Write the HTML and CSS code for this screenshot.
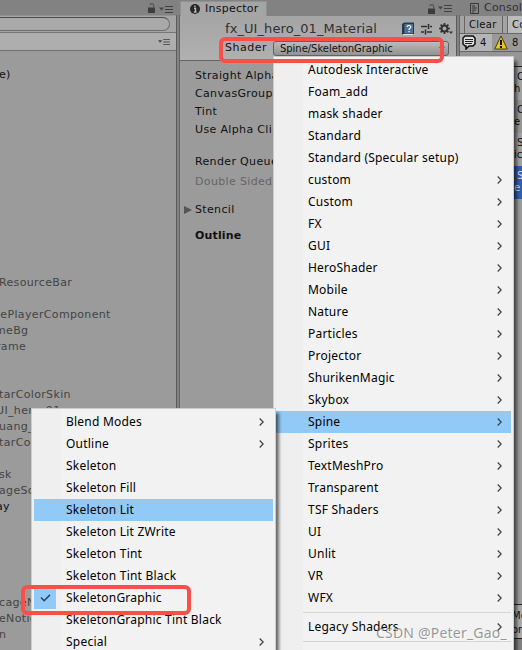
FILE: index.html
```html
<!DOCTYPE html>
<html lang="en"><head><meta charset="utf-8"><title>Inspector</title><link rel="stylesheet" href="styles.css"></head>
<body>
<svg width="0" height="0" class="defs"><defs>
<symbol id="lock" viewBox="0 0 8 10"><path d="M0 4.5h7V10H0z" fill="#3c3c3c"/><path d="M2 2.2C2.4 0 5.7 0 5.7 2.5V5" fill="none" stroke="#555" stroke-width="1.2"/></symbol>
<symbol id="opts" viewBox="0 0 14 7"><path d="M0 1.5h5L2.500 4.500z" fill="#444"/><path d="M6 .5h8M6 3.5h8M6 6.500h8" stroke="#414141" stroke-width="1"/></symbol>
<symbol id="arr" viewBox="0 0 5 8"><path d="M.7.5L4.2 4 .7 7.5" fill="none" stroke="#444" stroke-width="1.3"/></symbol>
</defs></svg>
<div class="app">
<section class="hierarchy">
<div class="bar"><svg class="lock"><use href="#lock"/></svg><svg class="opts"><use href="#opts"/></svg></div>
<div class="search"><div class="field"></div></div>
<div class="scene"><svg class="opts small"><use href="#opts"/></svg></div>
<div class="tree"><p class="r0 live">e)</p><p class="r13">ResourceBar</p><p class="r15 cut6">nePlayerComponent</p><p class="r16 cut4">meBg</p><p class="r17 cut3">rame</p><p class="r20">tarColorSkin</p><p class="r21 cut3">UI_hero_01</p><p class="r22">uang_</p><p class="r23">tarCol</p><p class="r25">sk</p><p class="r26">ageScr</p><p class="r27 live cut3">ay</p><p class="r33">cageNo</p><p class="r34">eNotice</p><p class="r35">n</p></div>
</section>
<div class="split"></div>
<section class="inspector">
<div class="tabs"><div class="tab"><svg width="10" height="10" viewBox="0 0 10 10"><circle cx="5" cy="5" r="5" fill="#262626"/><path d="M5 1.5v1.7M4 4.5h1.5V8M3.8 8h2.8" fill="none" stroke="#bbb" stroke-width="1.4"/></svg><span>Inspector</span></div><svg class="lock"><use href="#lock"/></svg><svg class="opts"><use href="#opts"/></svg></div>
<div class="head">
<div class="title"><span>fx_UI_hero_01_Material</span>
<svg class="book" viewBox="0 0 14 14"><path d="M1 2l2-1.500h10v11l-1.500 1.500H2L1 12z" fill="#26384e"/><path d="M3.500 2H12v9.500H3.500z" fill="#4f7398"/><path d="M2 12.500h10" stroke="#ddd"/><path d="M6 5c0-2 4-2 3.800 0C9.500 6.500 8 6 8 8M8 9v1.300" fill="none" stroke="#fff" stroke-width="1.2"/></svg>
<svg class="sliders" viewBox="0 0 11 11"><path d="M0 2.500h6M9 2.500h2M0 8h3M6 8h5" stroke="#303030" stroke-width="1.7"/><path d="M7.500 0v5M4.500 5.500v5" stroke="#303030" stroke-width="1.6"/></svg>
<svg class="gear" viewBox="0 0 14 12"><circle cx="5.500" cy="5.500" r="3" fill="none" stroke="#333" stroke-width="2"/><path d="M5.500 0v2M5.500 9v2M0 5.500h2M9 5.500h2M1.600 1.600L3 3M8 8l1.400 1.400M9.400 1.600L8 3M3 8L1.600 9.400" stroke="#333" stroke-width="1.7"/><path d="M10 8.500h4l-2 2.500z" fill="#333"/></svg></div>
<div class="shader"><span>Shader</span><div class="drop">Spine/SkeletonGraphic<i></i></div></div>
</div>
<div class="props"><p>Straight Alpha</p><p>CanvasGroup</p><p>Tint</p><p>Use Alpha Clip</p><p class="queue">Render Queue</p><p class="off">Double Sided</p><p class="fold">Stencil</p><p class="outline">Outline</p></div>
</section>
<div class="split"></div>
<section class="console">
<div class="ctab"><svg width="9" height="11" viewBox="0 0 9 11"><path d="M.5.500h8v10h-8zM2 3h3M2 5h5M2 7h4M2 9h2" fill="none" stroke="#383838"/></svg><span>Console</span></div>
<div class="tools"><span>Clear</span><span class="coll">Collapse</span></div>
<div class="counts"><div class="info"><svg width="14" height="15" viewBox="0 0 14 15"><path d="M3 1h8l2 2v6l-2 2H7l-3 3V11H3L1 9V3z" fill="#ddd" stroke="#111" stroke-width="1.500"/><path d="M3 4.500h8M3 6.500h8M3 8.500h7" stroke="#222"/></svg><span>4</span></div><div class="warn"><svg width="14" height="15" viewBox="0 0 14 15"><path d="M7 1L13.300 14H.7z" fill="#e5c629" stroke="#4b3e0b"/><path d="M7 5v5M7 11v2" stroke="#111" stroke-width="2"/></svg><span>8</span></div></div>
<div class="log"><div class="msg m0"></div><div class="msg"><p>C</p><p class="in">h</p></div><div class="msg"><p>C</p><p class="in">e</p></div><div class="msg"><p>S</p><p class="in">ic</p></div><div class="msg sel"><p>S</p><p class="in">e</p></div></div>
<div class="detail"><p>Me</p><p class="or">or</p></div><div class="foot"></div>
</section>
</div>
<nav class="menu main">
<p>Autodesk Interactive</p><p>Foam_add</p><p>mask shader</p><p>Standard</p><p>Standard (Specular setup)</p>
<p>custom<svg><use href="#arr"/></svg></p><p>Custom<svg><use href="#arr"/></svg></p><p>FX<svg><use href="#arr"/></svg></p><p>GUI<svg><use href="#arr"/></svg></p><p>HeroShader<svg><use href="#arr"/></svg></p><p>Mobile<svg><use href="#arr"/></svg></p><p>Nature<svg><use href="#arr"/></svg></p><p>Particles<svg><use href="#arr"/></svg></p><p>Projector<svg><use href="#arr"/></svg></p><p>ShurikenMagic<svg><use href="#arr"/></svg></p><p>Skybox<svg><use href="#arr"/></svg></p><p class="hot">Spine<svg><use href="#arr"/></svg></p><p>Sprites<svg><use href="#arr"/></svg></p><p>TextMeshPro<svg><use href="#arr"/></svg></p><p>Transparent<svg><use href="#arr"/></svg></p><p>TSF Shaders<svg><use href="#arr"/></svg></p><p>UI<svg><use href="#arr"/></svg></p><p>Unlit<svg><use href="#arr"/></svg></p><p>VR<svg><use href="#arr"/></svg></p><p>WFX<svg><use href="#arr"/></svg></p><hr><p>Legacy Shaders<svg><use href="#arr"/></svg></p><hr>
</nav>
<nav class="menu sub">
<p>Blend Modes<svg><use href="#arr"/></svg></p><p>Outline<svg><use href="#arr"/></svg></p><p>Skeleton</p><p>Skeleton Fill</p><p class="hot">Skeleton Lit</p><p>Skeleton Lit ZWrite</p><p>Skeleton Tint</p><p>Skeleton Tint Black</p><p class="checked"><b><svg viewBox="0 0 12 9"><path d="M1 4l3.500 3.500L11 1" fill="none" stroke="#2c4358" stroke-width="1.700"/></svg></b>SkeletonGraphic</p><p>SkeletonGraphic Tint Black</p><p>Special<svg><use href="#arr"/></svg></p>
</nav>
<div class="mark top"></div><div class="mark bottom"></div>
<div class="credit">CSDN @Peter_Gao_</div>
</body></html>
```
FILE: styles.css
```css
*{box-sizing:border-box}
body,p{margin:0}
body{width:522px;height:650px;overflow:hidden;position:relative;background:#9b9b9b;font:11px/16px "DejaVu Sans",sans-serif;color:#111;white-space:nowrap}
svg{flex:none;display:block}
.defs{position:absolute}
.app{display:flex;height:650px}
.hierarchy{width:176px;overflow:hidden;background:#9b9b9b}
.bar{height:15px;background:#828282;display:flex;justify-content:flex-end;align-items:flex-end;gap:3px;padding:0 3px 2px 0}
.lock{width:8px;height:10px}
.opts{width:14px;height:7px}
.opts.small{height:6px}
.search{height:17px;background:#a5a5a5;padding:1px 6px 1px 0;border-top:1px solid #929292}
.field{height:14px;background:#a9a9a9;border:1px solid #707070;border-top:1px solid #4c4c4c;border-left:0;border-radius:0 8px 8px 0}
.scene{height:19px;background:#aeaeae;border-top:1px solid #777;border-bottom:1px solid #727272;display:flex;justify-content:flex-end;align-items:center;padding-right:5px}
.tree{height:599px;padding-top:16px;display:grid;grid-template-rows:repeat(36,16px);color:#444;letter-spacing:.35px}
.tree p{margin-left:-1px}
.tree .cut3{margin-left:-4px}
.tree .cut4{margin-left:-5px}
.tree .cut6{margin-left:-7px}
.tree .live{color:#111}
.r0{grid-row:1}.r13{grid-row:14}.r15{grid-row:16}.r16{grid-row:17}.r17{grid-row:18}.r20{grid-row:21}.r21{grid-row:22}.r22{grid-row:23}.r23{grid-row:24}.r25{grid-row:26}.r26{grid-row:27}.r27{grid-row:28}.r33{grid-row:34}.r34{grid-row:35}.r35{grid-row:36}
.split{width:4px;margin-top:15px;background:#818181;border-left:1px solid #5c5c5c;border-right:1px solid #656565;flex:none;box-shadow:0 -15px #828282}
.inspector{width:276px;background:#9b9b9b}
.tabs{height:16px;background:#828282;display:flex;align-items:center;padding:1px 4px 0 0;gap:2px}
.tab{width:87px;height:15px;background:#a5a5a5;border:1px solid #919191;border-bottom:0;display:flex;align-items:center;gap:5px;padding-left:9px;margin-right:auto;letter-spacing:.25px}
.head{height:45px;border-bottom:1px solid #646464;background:linear-gradient(#a5a5a5,#b0b0b0)}
.title{height:24px;display:flex;align-items:center;padding:2px 3px 0 45px;font-size:13px;letter-spacing:.08px;color:#303030}
.title span{flex:1}
.book{width:14px;height:14px}.sliders{width:11px;height:11px;margin-left:6px}.gear{width:14px;height:12px;margin-left:7px}
.shader{display:flex;align-items:center;padding-left:45px;height:16px}
.shader span{width:48px;letter-spacing:.5px}
.drop{width:176px;height:15px;border:1px solid #626262;border-radius:3px;background:linear-gradient(#bbb,#929292);padding-left:6px;font-size:10px;line-height:13px;display:flex;align-items:center;justify-content:space-between;letter-spacing:-.04px}
.drop i{border:3px solid transparent;border-top-color:#333;margin:3px 3px 0 0}
.props{padding:6px 0 0 15px;letter-spacing:.35px;width:93px}
.props p{height:18px;line-height:18px}
.props .queue{margin-top:14px}
.props .off{color:#666;height:20px;line-height:22px}
.props .fold{margin:10px 0 0 -11px;display:flex;align-items:center}
.fold::before{content:"";border:4px solid transparent;border-left:8px solid #555;border-right:0;margin-right:3px}
.props .outline{font-weight:bold;margin-top:8px;letter-spacing:.15px}
.console{width:62px;display:flex;flex-direction:column;overflow:hidden;background:#9b9b9b}
.ctab{height:16px;background:#828282;display:flex;align-items:center;gap:5px;padding-left:10px;color:#303030;letter-spacing:.2px;flex:none}
.tools{height:18px;flex:none;display:flex;gap:4px;padding-left:4px;background:#a4a4a4;font-size:10px;border-bottom:1px solid #686868;line-height:18px}
.tools span{width:39px;flex:none;padding-left:4px;border:solid #666;border-width:0 1px;letter-spacing:.3px;line-height:18px}
.tools .coll{background:#bbb}
.counts{display:flex;height:18px;background:#999;border-bottom:1px solid #666;font-size:10px;flex:none}
.counts div{display:flex;align-items:center;gap:4px;padding-left:2px;width:32px;flex:none}
.counts .info{background:#b5b5b5}
.log{height:549px;flex:none}
.msg{height:33px;font-size:10px;line-height:12px;padding:4px 0 0 57px;background:#969696}
.m0{height:15px;border-bottom:1px solid #222}
.msg:nth-child(even){background:#a2a2a2}
.in{margin-left:-3px}
.msg.sel{background:#2f5fae;color:#ddd}
.detail{height:35px;border:solid #222;border-width:1px 0;margin-top:3px;padding:4px 0 0 52px;font-size:10px;line-height:14px;background:#aaa;flex:none}
.foot{flex:1;background:#808080}
.menu{position:absolute;background:linear-gradient(90deg,#efefef 29px,#f2f2f2 29px);border:1px solid #ccc;padding:2px;box-shadow:4px 4px 3px -1px rgba(0,0,0,.55);font:12px/22px "Noto Sans","Noto Sans CJK SC",sans-serif;color:#000}
.menu p{height:22px;display:flex;align-items:center;letter-spacing:.22px;padding-left:32px}
.menu p>svg{width:5px;height:8px;margin:0 9px 0 auto}
.menu .hot{background:#91c9f7}
.menu hr{border:0;border-top:1px solid #d5d5d5;height:1px;margin:3px 0 3px 27px}
.main{left:273px;top:56px;width:241px;height:610px}
.sub{left:31px;top:408px;width:245px;height:260px}
.menu .checked{padding-left:0}
.checked b{width:22px;height:22px;margin-right:10px;background:#91c9f7;display:grid;place-items:center}
.menu .checked b svg{width:11px;height:8px;margin:0}
.mark{position:absolute;border:4px solid #fa4f49;border-radius:6px}
.top{left:219px;top:37px;width:225px;height:26px}
.bottom{left:21px;top:585px;width:170px;height:30px}
.credit{position:absolute;left:376px;top:623px;font:14px/20px "Noto Sans",sans-serif;letter-spacing:.2px;color:rgba(110,110,110,.7);text-shadow:1px 1px #ffffff99}
```
